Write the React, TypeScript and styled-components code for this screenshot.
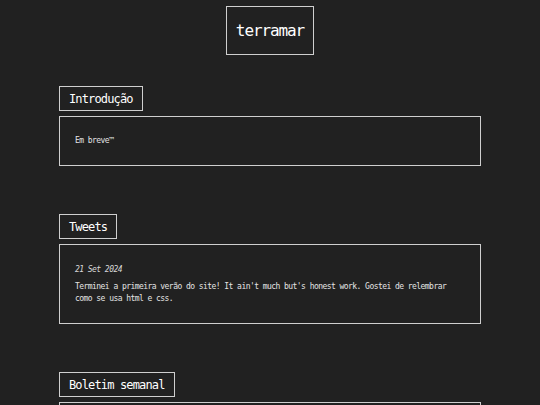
import styled, { createGlobalStyle } from 'styled-components';

const GlobalStyle = createGlobalStyle`
  html, body {
    margin: 0;
    padding: 0;
    background: #212121;
  }
  body {
    font-family: "DejaVu Sans Mono", "Liberation Mono", monospace;
    color: #f2f2f2;
  }
  * {
    box-sizing: border-box;
  }
`;

const Page = styled.div`
  display: flex;
  flex-direction: column;
  align-items: center;
  padding-top: 6px;
`;

const Title = styled.h1`
  margin: 0;
  padding: 0 9px;
  height: 49px;
  display: flex;
  align-items: center;
  border: 1.5px solid #cfcfcf;
  font-size: 16px;
  letter-spacing: -1.1px;
  font-weight: normal;
  color: #ffffff;
`;

const Main = styled.main`
  width: 422px;
  display: flex;
  flex-direction: column;
  gap: 48px;
  margin-top: 31px;
`;

const Section = styled.section`
  display: flex;
  flex-direction: column;
  align-items: flex-start;
  gap: 5px;
`;

const SectionTitle = styled.h2`
  margin: 0;
  height: 25px;
  padding: 0 9px;
  display: flex;
  align-items: center;
  border: 1.5px solid #cfcfcf;
  font-size: 12px;
  letter-spacing: -0.85px;
  font-weight: normal;
  color: #ffffff;
`;

const Card = styled.div<{ $minHeight?: number }>`
  align-self: stretch;
  min-height: ${({ $minHeight }) => $minHeight ?? 50}px;
  padding: 17px 15px;
  border: 1.5px solid #cfcfcf;
  display: flex;
  flex-direction: column;
  justify-content: center;
  gap: 5px;
`;

const Text = styled.p<{ $italic?: boolean }>`
  margin: 0;
  font-size: 8px;
  line-height: 12px;
  letter-spacing: -0.55px;
  color: ${({ $italic }) => ($italic ? '#d8d8d8' : '#e4e4e4')};
  font-style: ${({ $italic }) => ($italic ? 'italic' : 'normal')};
`;

export default function App() {
  return (
    <>
      <GlobalStyle />
      <Page>
        <Title>terramar</Title>
        <Main>
          <Section>
            <SectionTitle>Introdução</SectionTitle>
            <Card>
              <Text>Em breve™</Text>
            </Card>
          </Section>
          <Section>
            <SectionTitle>Tweets</SectionTitle>
            <Card $minHeight={80}>
              <Text $italic>21 Set 2024</Text>
              <Text>
                Terminei a primeira verão do site! It ain't much but's honest work. Gostei de relembrar
                como se usa html e css.
              </Text>
            </Card>
          </Section>
          <Section>
            <SectionTitle>Boletim semanal</SectionTitle>
            <Card $minHeight={60}>
              <Text>&nbsp;</Text>
            </Card>
          </Section>
        </Main>
      </Page>
    </>
  );
}
